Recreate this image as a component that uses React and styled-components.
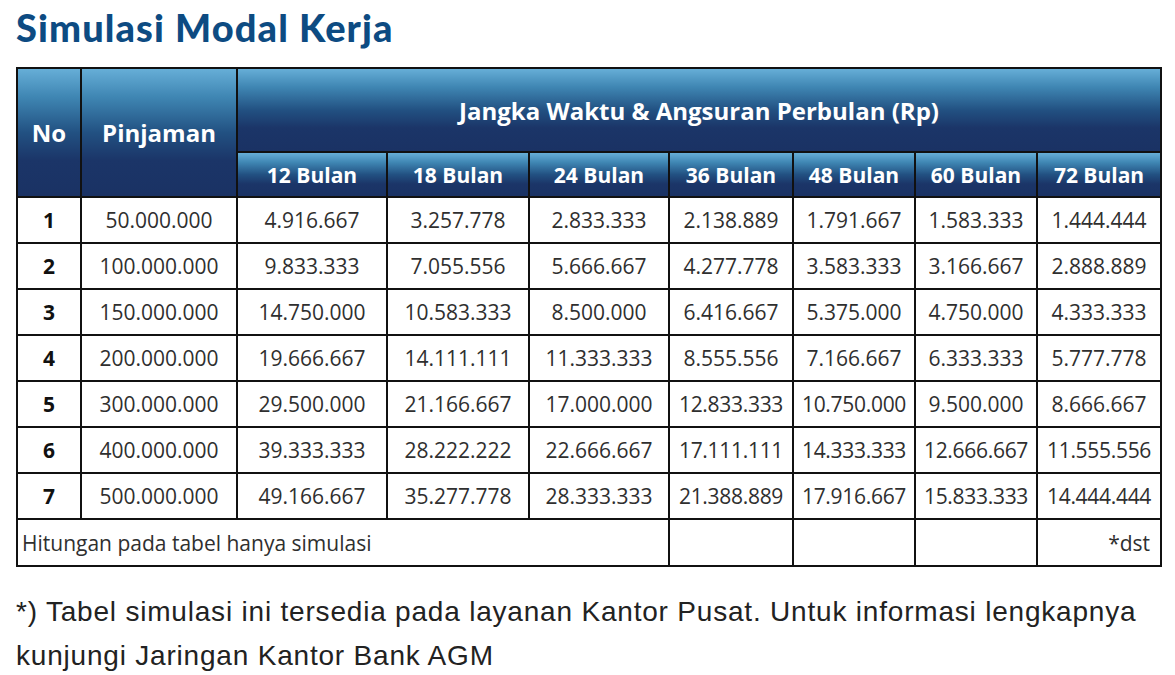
import React from "react";
import styled, { createGlobalStyle } from "styled-components";

const Global = createGlobalStyle`
  html, body { margin: 0; padding: 0; background: #ffffff; }
  body { font-family: "Open Sans", sans-serif; }
`;

const Page = styled.div`
  padding: 5px 15px 0 16px;
  width: 1144px;
`;

const Title = styled.h1`
  margin: 0 0 18px 0;
  font-family: Lato, sans-serif;
  font-weight: 900;
  font-size: 38px;
  line-height: 44px;
  color: #0d4b82;
  letter-spacing: 1.1px;
`;

const Table = styled.table`
  width: 1144px;
  border-collapse: collapse;
  table-layout: fixed;
  font-family: "Open Sans", sans-serif;
  border: 2px solid #1a1a1a;
`;

const headGradient = `linear-gradient(to bottom, #66aed7 0%, #3f86b3 22%, #225182 50%, #1b3568 72%, #1a3264 100%)`;

const HeadCell = styled.th`
  border: 2px solid #111;
  background: ${headGradient};
  color: #ffffff;
  font-weight: 700;
  font-size: ${(p) => p.$size || 24}px;
  height: ${(p) => p.$h}px;
  padding: 0;
  text-align: center;
  vertical-align: middle;
  white-space: nowrap;
`;

const Cell = styled.td`
  border: 2px solid #111;
  height: ${(p) => p.$h || 44}px;
  padding: ${(p) => (p.$align === "left" ? "0 0 0 4px" : p.$align === "right" ? "0 10px 0 0" : "0")};
  font-size: 21px;
  color: ${(p) => (p.$bold ? "#111" : "#2f2f2f")};
  font-weight: ${(p) => (p.$bold ? 700 : 400)};
  text-align: ${(p) => p.$align || "center"};
  vertical-align: middle;
  white-space: nowrap;
  letter-spacing: ${(p) => (p.$tight ? "-0.3px" : "0")};
`;

const Note = styled.p`
  margin: 23px 0 0 0;
  font-family: "Liberation Sans", Arial, sans-serif;
  font-size: 28px;
  letter-spacing: 0.8px;
  line-height: 44px;
  color: #222;
  white-space: nowrap;
`;

const widths = [64, 156, 150, 142, 140, 124, 122, 122, 124];
const terms = [12, 18, 24, 36, 48, 60, 72];

const rows = [
  ["1", "50.000.000", "4.916.667", "3.257.778", "2.833.333", "2.138.889", "1.791.667", "1.583.333", "1.444.444"],
  ["2", "100.000.000", "9.833.333", "7.055.556", "5.666.667", "4.277.778", "3.583.333", "3.166.667", "2.888.889"],
  ["3", "150.000.000", "14.750.000", "10.583.333", "8.500.000", "6.416.667", "5.375.000", "4.750.000", "4.333.333"],
  ["4", "200.000.000", "19.666.667", "14.111.111", "11.333.333", "8.555.556", "7.166.667", "6.333.333", "5.777.778"],
  ["5", "300.000.000", "29.500.000", "21.166.667", "17.000.000", "12.833.333", "10.750.000", "9.500.000", "8.666.667"],
  ["6", "400.000.000", "39.333.333", "28.222.222", "22.666.667", "17.111.111", "14.333.333", "12.666.667", "11.555.556"],
  ["7", "500.000.000", "49.166.667", "35.277.778", "28.333.333", "21.388.889", "17.916.667", "15.833.333", "14.444.444"],
];

export default function App() {
  return (
    <Page>
      <Global />
      <Title>Simulasi Modal Kerja</Title>
      <Table>
        <colgroup>
          {widths.map((w, i) => (
            <col key={i} style={{ width: w }} />
          ))}
        </colgroup>
        <thead>
          <tr>
            <HeadCell rowSpan={2}>No</HeadCell>
            <HeadCell rowSpan={2}>Pinjaman</HeadCell>
            <HeadCell colSpan={7} $h={82}>
              Jangka Waktu &amp; Angsuran Perbulan (Rp)
            </HeadCell>
          </tr>
          <tr>
            {terms.map((t) => (
              <HeadCell key={t} $h={43} $size={21}>
                {t} Bulan
              </HeadCell>
            ))}
          </tr>
        </thead>
        <tbody>
          {rows.map((r) => (
            <tr key={r[0]}>
              {r.map((v, i) => (
                <Cell key={i} $bold={i === 0} $tight={v.length >= 10 && i >= 5}>
                  {v}
                </Cell>
              ))}
            </tr>
          ))}
          <tr>
            <Cell colSpan={5} $align="left" $h={45}>Hitungan pada tabel hanya simulasi</Cell>
            <Cell $h={45} />
            <Cell $h={45} />
            <Cell $h={45} />
            <Cell $align="right" $h={45}>*dst</Cell>
          </tr>
        </tbody>
      </Table>
      <Note>
        *) Tabel simulasi ini tersedia pada layanan Kantor Pusat. Untuk informasi lengkapnya
        <br />
        kunjungi Jaringan Kantor Bank AGM
      </Note>
    </Page>
  );
}
